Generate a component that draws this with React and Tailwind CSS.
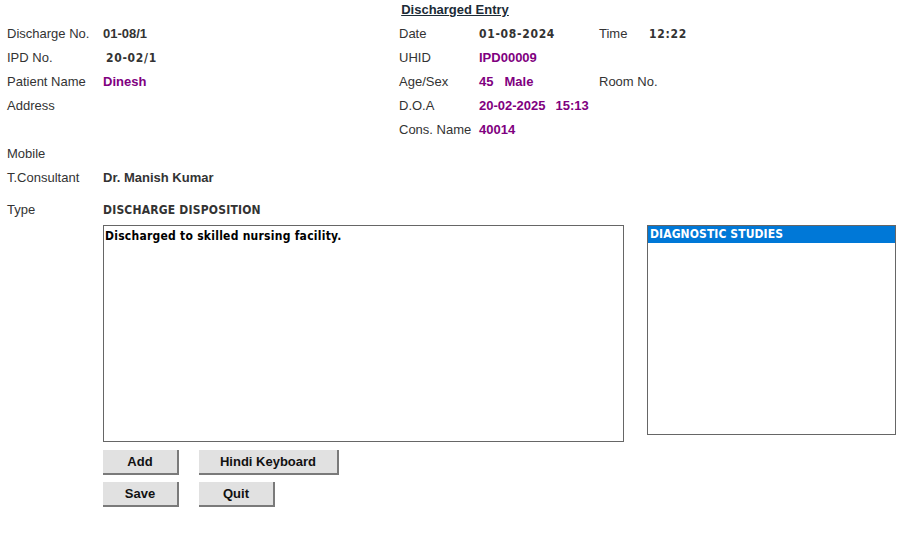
export default function App() {
  const lbl = "text-[13px] text-[#333]";
  const val = "text-[13px] font-bold text-[#333]";
  const pur = "text-[13px] font-bold text-[#800080]";
  const verd = "text-[12px] font-bold text-[#333] font-['DejaVu_Sans_Condensed','DejaVu_Sans',sans-serif] tracking-[0.7px]";
  const btn = "h-[25px] bg-[#e1e1e1] border-r-2 border-b-2 border-[#7a7a7a] text-[13px] font-bold text-[#111] leading-none";

  return (
    <div className="w-[900px] h-[533px] bg-white font-['Liberation_Sans',Arial,sans-serif] leading-6">

      <div className="h-[22px] flex justify-center pl-[10px] items-start">
        <span className="text-[13px] leading-[19px] font-bold underline text-[#1c2b36]">
          Discharged Entry
        </span>
      </div>

      <div className="grid grid-cols-[96px_296px_80px_120px_50px_1fr] pl-[7px] auto-rows-[24px] items-center">

        <span className={lbl}>Discharge No.</span>
        <span className={val}>01-08/1</span>
        <span className={lbl}>Date</span>
        <span className={verd}>01-08-2024</span>
        <span className={lbl}>Time</span>
        <span className={verd}>12:22</span>

        <span className={lbl}>IPD No.</span>
        <span className={verd + " pl-[3px]"}>20-02/1</span>
        <span className={lbl}>UHID</span>
        <span className={pur}>IPD00009</span>
        <span></span>
        <span></span>

        <span className={lbl}>Patient Name</span>
        <span className={pur}>Dinesh</span>
        <span className={lbl}>Age/Sex</span>
        <span className={pur}>45<span className="pl-[11px]">Male</span></span>
        <span className={lbl + " whitespace-nowrap"}>Room No.</span>
        <span></span>

        <span className={lbl}>Address</span>
        <span></span>
        <span className={lbl}>D.O.A</span>
        <span className={pur + " whitespace-nowrap"}>20-02-2025<span className="pl-[10px]">15:13</span></span>
        <span></span>
        <span></span>

        <span></span>
        <span></span>
        <span className={lbl + " whitespace-nowrap"}>Cons. Name</span>
        <span className={pur}>40014</span>
        <span></span>
        <span></span>

        <span className={lbl}>Mobile</span>
        <span></span>
        <span></span>
        <span></span>
        <span></span>
        <span></span>

        <span className={lbl}>T.Consultant</span>
        <span className={val + " whitespace-nowrap"}>Dr. Manish Kumar</span>
        <span></span>
        <span></span>
        <span></span>
        <span></span>
      </div>

      <div className="flex pl-[7px] mt-[8px] h-6 items-center">
        <span className={lbl + " w-[96px]"}>Type</span>
        <span className="text-[12px] font-bold text-[#333] font-['DejaVu_Sans_Condensed','DejaVu_Sans',sans-serif] tracking-[0.2px]">
          DISCHARGE DISPOSITION
        </span>
      </div>

      <div className="flex mt-[3px] pl-[103px]">
        <div className="w-[521px] h-[217px] border border-[#666] px-[1px] py-[2px]">
          <p className="text-[12px] leading-4 font-bold text-black font-['DejaVu_Sans_Condensed','DejaVu_Sans',sans-serif] tracking-[0.25px]">
            Discharged to skilled nursing facility.
          </p>
        </div>

        <div className="ml-[23px] w-[249px] h-[210px] border border-[#666]">
          <div className="bg-[#0078d7] h-[17px] px-[2px] text-[12px] leading-[17px] font-bold text-white font-['DejaVu_Sans_Condensed','DejaVu_Sans',sans-serif] tracking-[0.1px]">
            DIAGNOSTIC STUDIES
          </div>
        </div>
      </div>

      <div className="pl-[103px] mt-2 flex flex-col gap-[7px]">
        <div className="flex gap-5">
          <button className={btn + " w-[76px]"}>Add</button>
          <button className={btn + " w-[140px]"}>Hindi Keyboard</button>
        </div>
        <div className="flex gap-5">
          <button className={btn + " w-[76px]"}>Save</button>
          <button className={btn + " w-[76px]"}>Quit</button>
        </div>
      </div>

    </div>
  );
}
